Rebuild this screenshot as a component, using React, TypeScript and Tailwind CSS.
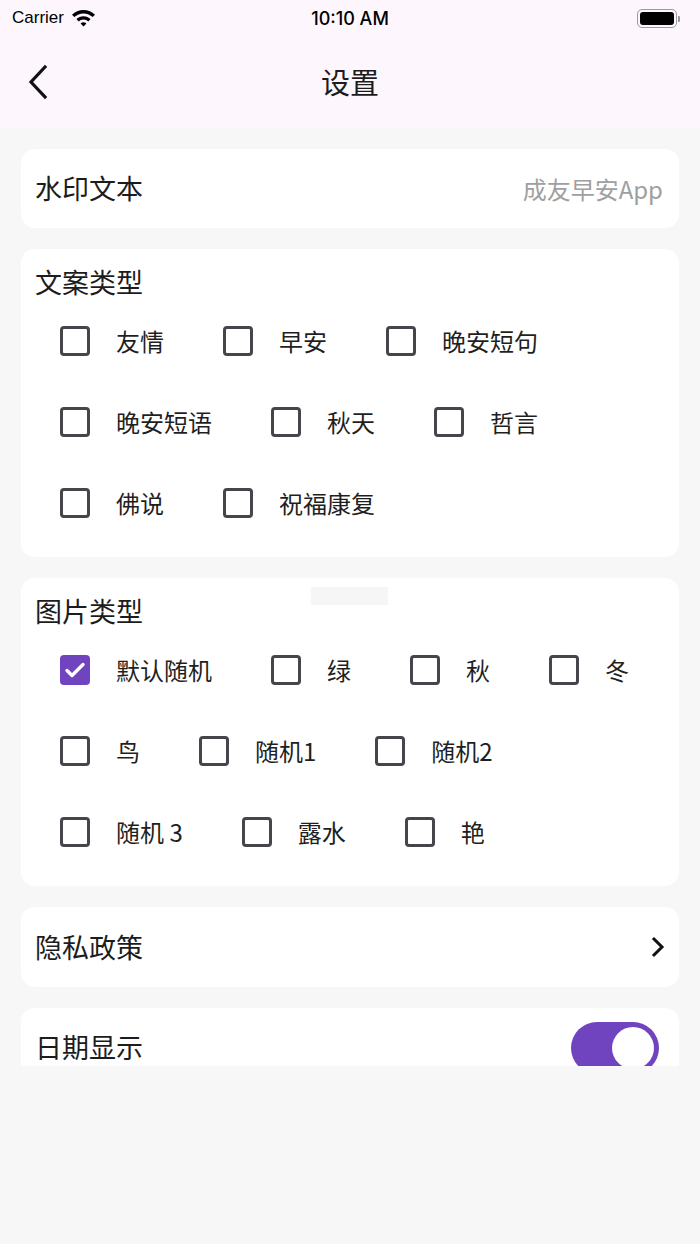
import { Fragment } from 'react'

const CJK = { fontFamily: '"Noto Sans CJK SC", "Noto Sans", sans-serif' }

const TEXT_TYPES = ['友情', '早安', '晚安短句', '晚安短语', '秋天', '哲言', '佛说', '祝福康复']
const IMAGE_TYPES = ['默认随机', '绿', '秋', '冬', '鸟', '随机1', '随机2', '随机 3', '露水', '艳']

function Checkbox({ checked }: { checked?: boolean }) {
  if (checked) {
    return (
      <div className="w-[30px] h-[30px] rounded-[4px] bg-[#7044bf] flex items-center justify-center shrink-0">
        <svg width="24" height="24" viewBox="0 0 24 24" fill="none" stroke="white" strokeWidth="3.4" strokeLinecap="round" strokeLinejoin="round">
          <path d="M4 12.5l5 5L20 6.5" />
        </svg>
      </div>
    )
  }
  return <div className="w-[30px] h-[30px] rounded-[4px] border-[3px] border-[#46454b] shrink-0" />
}

function OptionGroup({ title, items, checked }: { title: string; items: string[]; checked?: string }) {
  return (
    <div className="relative bg-white rounded-[14px] pt-[15px] pb-[14px]">
      <div className="h-[36px] pl-[14px] flex items-center text-[27px] text-[#1c1c1c]">{title}</div>
      <div className="flex flex-wrap gap-x-[59px] pl-[39px] pr-[39px]">
        {items.map((item) => (
          <div key={item} className="flex items-center h-[81px]">
            <Checkbox checked={item === checked} />
            <span className="ml-[26px] text-[24px] text-[#1f1f1f]">{item}</span>
          </div>
        ))}
      </div>
    </div>
  )
}

export default function App() {
  return (
    <div className="w-full h-[1244px] bg-[#f7f7f7] flex flex-col" style={CJK}>
      {/* status + nav */}
      <div className="h-[128px] bg-[#fdf7fd] shrink-0">
        <div className="h-[36px] relative flex items-center px-[12px]" style={{ fontFamily: '"Liberation Sans", Arial, sans-serif' }}>
          <div className="flex items-center gap-[7px]">
            <span className="text-[17px] text-black">Carrier</span>
            <svg width="25" height="18" viewBox="0 0 25 18">
              <path d="M12.5 1C8 1 4 2.8 1 5.7l2.3 2.4C5.7 5.8 9 4.4 12.5 4.4s6.8 1.4 9.2 3.7L24 5.7C21 2.8 17 1 12.5 1z" fill="black" />
              <path d="M12.5 7.2c-2.8 0-5.3 1.1-7.1 2.9l2.3 2.4c1.2-1.2 2.9-2 4.8-2s3.6.8 4.8 2l2.3-2.4c-1.8-1.8-4.3-2.9-7.1-2.9z" fill="black" />
              <path d="M12.5 13.2c-1.1 0-2.1.4-2.9 1.2l2.9 3 2.9-3c-.8-.8-1.8-1.2-2.9-1.2z" fill="black" />
            </svg>
          </div>
          <span className="absolute left-1/2 -translate-x-1/2 text-[18px] font-medium text-black" style={{ fontFamily: 'Inter, "Liberation Sans", sans-serif' }}>10:10 AM</span>
          <div className="ml-auto mr-[8px] mt-[1px] flex items-center">
            <div className="w-[40px] h-[19px] rounded-[5px] border-[1.5px] border-[#9a9a9a] p-[2px]">
              <div className="w-full h-full rounded-[3px] bg-black" />
            </div>
            <div className="w-[2px] h-[6px] rounded-r-[1px] bg-[#9a9a9a] ml-[1px]" />
          </div>
        </div>
        <div className="h-[92px] relative flex items-center">
          <svg className="ml-[26px]" width="24" height="36" viewBox="0 0 24 36" fill="none" stroke="#111" strokeWidth="3.2" strokeLinecap="square">
            <path d="M19 3L5 18l14 15" />
          </svg>
          <span className="absolute left-1/2 -translate-x-1/2 text-[29px] text-[#1c1c1c]">设置</span>
        </div>
      </div>

      {/* scrolling content */}
      <div className="h-[938px] overflow-hidden px-[21px] pt-[21px] flex flex-col gap-[21px]">
        <div className="h-[79px] shrink-0 bg-white rounded-[14px] flex items-center justify-between pl-[14px] pr-[16px]">
          <span className="text-[27px] text-[#1c1c1c]">水印文本</span>
          <span className="text-[24px] text-[#a0a0a0]">成友早安App</span>
        </div>

        <OptionGroup title="文案类型" items={TEXT_TYPES} />

        <div className="relative">
          <OptionGroup title="图片类型" items={IMAGE_TYPES} checked="默认随机" />
          <div className="absolute left-[290px] top-[9px] w-[77px] h-[18px] bg-[#f6f6f6]" />
        </div>

        <div className="h-[80px] shrink-0 bg-white rounded-[14px] flex items-center justify-between pl-[14px] pr-[14px]">
          <span className="text-[27px] text-[#1c1c1c]">隐私政策</span>
          <svg width="14" height="22" viewBox="0 0 14 22" fill="none" stroke="#111" strokeWidth="3" strokeLinecap="square">
            <path d="M3 3l8 8-8 8" />
          </svg>
        </div>

        <Fragment>
          <div className="h-[79px] shrink-0 bg-white rounded-[14px] flex items-center justify-between pl-[14px] pr-[20px]">
            <span className="text-[27px] text-[#1c1c1c]">日期显示</span>
            <div className="w-[88px] h-[52px] rounded-full bg-[#7044bf] flex items-center justify-end pr-[5px]">
              <div className="w-[42px] h-[42px] rounded-full bg-white" />
            </div>
          </div>
        </Fragment>
      </div>
    </div>
  )
}
